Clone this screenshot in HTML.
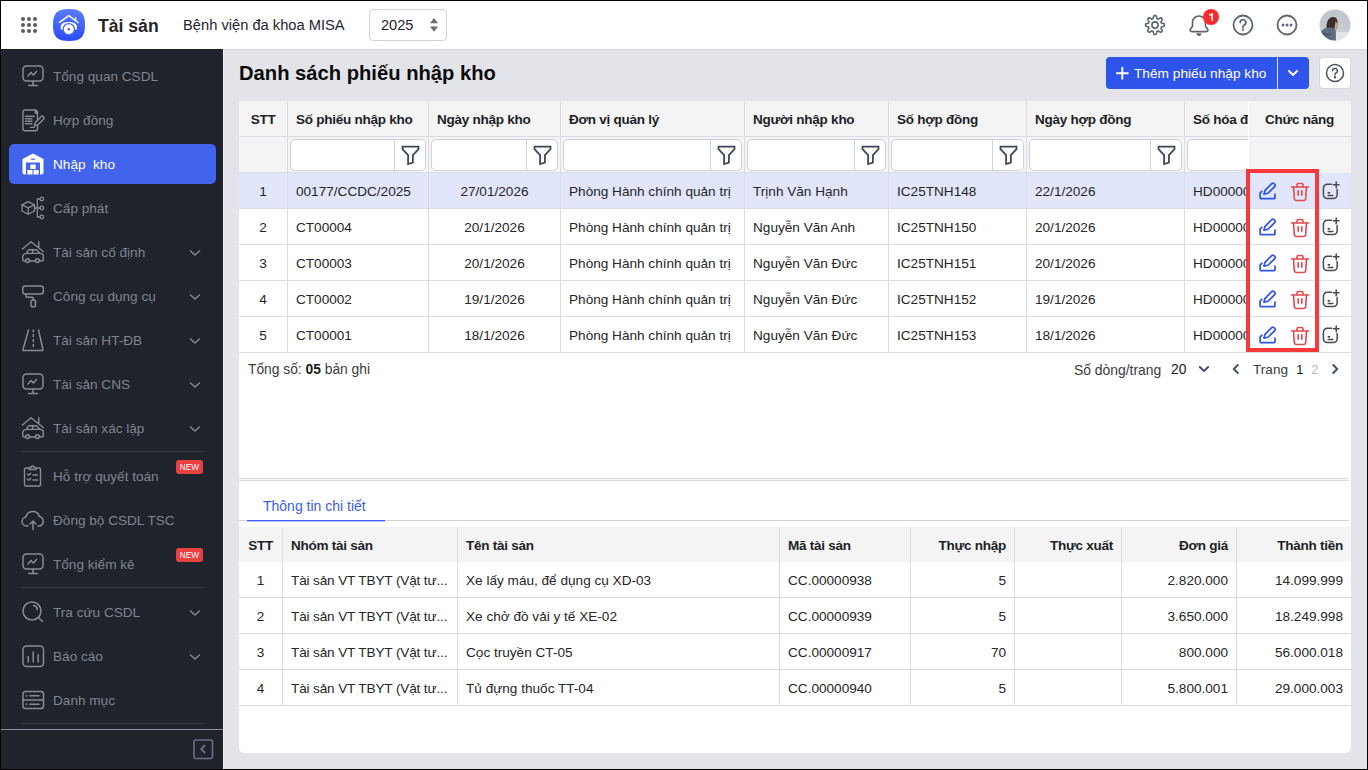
<!DOCTYPE html>
<html><head><meta charset="utf-8">
<style>
*{box-sizing:border-box;margin:0;padding:0}
html,body{width:1368px;height:770px;overflow:hidden;background:#000}
body{font-family:"Liberation Sans",sans-serif;position:relative;color:#262626}
.abs{position:absolute}
#frame{position:absolute;left:1px;top:1px;width:1366px;height:768px;background:#e3e4e9;overflow:hidden}
#hdr{position:absolute;left:0;top:0;width:1366px;height:48px;background:#fff}
#side{position:absolute;left:0;top:48px;width:222px;height:720px;background:#1f232b}
.nav{position:absolute;left:8px;width:207px;height:40px;border-radius:5px}
.nav .ic{position:absolute;left:13px;top:8px;width:22px;height:22px;overflow:visible}
.nav .tx{position:absolute;left:44px;top:0;line-height:40px;font-size:13.6px;color:#80858f;white-space:nowrap}
.nav .chev{position:absolute;left:180px;top:15px;width:12px;height:10px}
.nav.act{background:#4263eb}
.nav.act .tx{color:#fff;top:1px}
.nav.act .ic{top:9px}
.new{position:absolute;left:167px;top:3px;width:27px;height:14px;background:#e8413f;color:#fff;font-size:8.3px;line-height:14px;text-align:center;border-radius:3px}
.sdiv{position:absolute;left:21px;width:181px;height:1px;background:#3a3f49}
#main{position:absolute;left:0;top:0;width:1366px;height:768px}
table{border-collapse:collapse;table-layout:fixed}
.th{font-size:13.5px;font-weight:700;color:#1c1f26;line-height:35px;padding-top:1px;white-space:nowrap;letter-spacing:-.25px}
.td{font-size:13.6px;color:#262626;line-height:35px;padding-top:1px;white-space:nowrap}
.flt{height:32px;background:#fff;border:1px solid #cdd2dc;border-radius:5px}
</style></head><body>
<div id="frame">
  <div id="hdr">
    <!-- app grid -->
    <svg class="abs" style="left:20px;top:16px" width="16" height="16" viewBox="0 0 16 16" fill="#5c5c5c">
      <circle cx="2" cy="2" r="2"/><circle cx="8" cy="2" r="2"/><circle cx="14" cy="2" r="2"/>
      <circle cx="2" cy="8" r="2"/><circle cx="8" cy="8" r="2"/><circle cx="14" cy="8" r="2"/>
      <circle cx="2" cy="14" r="2"/><circle cx="8" cy="14" r="2"/><circle cx="14" cy="14" r="2"/>
    </svg>
    <!-- logo -->
    <svg class="abs" style="left:52px;top:8px" width="32" height="32" viewBox="0 0 32 32">
      <defs><linearGradient id="lg" x1="0" y1="0" x2="0" y2="1"><stop offset="0" stop-color="#5b7cff"/><stop offset="1" stop-color="#2b4cf6"/></linearGradient></defs>
      <path d="M16 0C28 0 32 4 32 16S28 32 16 32 0 28 0 16 4 0 16 0Z" fill="url(#lg)"/>
      <path d="M6.6 13.4L15.8 6.6l9.3 6.9" fill="none" stroke="#fff" stroke-width="1.5" stroke-linecap="round" stroke-linejoin="round"/>
      <path d="M22.6 8.8v3" fill="none" stroke="#fff" stroke-width="1.5" stroke-linecap="round"/>
      <path d="M7.8 20.8v-3.6c0-2.6 3.6-4.2 8-4.2s8 1.6 8 4.2v3.6z" fill="#fff"/>
      <circle cx="15.8" cy="20.2" r="6.3" fill="#4065fa"/>
      <circle cx="15.8" cy="20.2" r="5" fill="#fff"/>
      <path d="M15.8 18.6l1.6 1.6-1.6 1.6-1.6-1.6z" fill="#4065fa"/>
    </svg>
    <div class="abs" style="left:97px;top:14px;font-size:17.6px;font-weight:700;color:#262626;line-height:22px">Tài sản</div>
    <div class="abs" style="left:182px;top:14px;font-size:14.7px;color:#1f2433;line-height:20px">Bệnh viện đa khoa MISA</div>
    <div class="abs" style="left:368px;top:8px;width:78px;height:32px;border:1px solid #cfd3da;border-radius:4px;background:#fff">
      <div class="abs" style="left:11px;top:6px;font-size:14.6px;line-height:18px;color:#1f2433">2025</div>
      <svg class="abs" style="left:59px;top:7px" width="10" height="16" viewBox="0 0 10 16" fill="#6b6b6b"><path d="M1 6.3L5 1 9 6.3Z"/><path d="M1 9.5L5 14.7 9 9.5Z"/></svg>
    </div>
    <!-- right icons -->
    <svg class="abs" style="left:1143px;top:13px" width="22" height="22" viewBox="0 0 22 22" fill="none" stroke="#5d636d" stroke-width="1.6" stroke-linejoin="round">
      <path d="M11.00 1.60 L11.25 1.60 L11.49 1.61 L11.74 1.63 L11.98 1.65 L12.19 1.95 L12.36 2.39 L12.51 2.86 L12.63 3.35 L12.72 3.82 L12.80 4.27 L12.90 4.58 L13.07 4.63 L13.24 4.68 L13.40 4.75 L13.56 4.81 L13.73 4.88 L13.88 4.95 L14.04 5.03 L14.20 5.11 L14.48 4.96 L14.86 4.71 L15.26 4.44 L15.69 4.18 L16.12 3.95 L16.56 3.76 L16.92 3.69 L17.10 3.85 L17.29 4.01 L17.47 4.18 L17.65 4.35 L17.82 4.53 L17.99 4.71 L18.15 4.90 L18.31 5.08 L18.24 5.44 L18.05 5.88 L17.82 6.31 L17.56 6.74 L17.29 7.14 L17.04 7.51 L16.89 7.80 L16.97 7.96 L17.05 8.12 L17.12 8.27 L17.19 8.44 L17.25 8.60 L17.32 8.76 L17.37 8.93 L17.42 9.10 L17.73 9.20 L18.18 9.28 L18.65 9.37 L19.14 9.49 L19.61 9.64 L20.05 9.81 L20.35 10.02 L20.37 10.26 L20.39 10.51 L20.40 10.75 L20.40 11.00 L20.40 11.25 L20.39 11.49 L20.37 11.74 L20.35 11.98 L20.05 12.19 L19.61 12.36 L19.14 12.51 L18.65 12.63 L18.18 12.72 L17.73 12.80 L17.42 12.90 L17.37 13.07 L17.32 13.24 L17.25 13.40 L17.19 13.56 L17.12 13.73 L17.05 13.88 L16.97 14.04 L16.89 14.20 L17.04 14.48 L17.29 14.86 L17.56 15.26 L17.82 15.69 L18.05 16.12 L18.24 16.56 L18.31 16.92 L18.15 17.10 L17.99 17.29 L17.82 17.47 L17.65 17.65 L17.47 17.82 L17.29 17.99 L17.10 18.15 L16.92 18.31 L16.56 18.24 L16.12 18.05 L15.69 17.82 L15.26 17.56 L14.86 17.29 L14.48 17.04 L14.20 16.89 L14.04 16.97 L13.88 17.05 L13.73 17.12 L13.56 17.19 L13.40 17.25 L13.24 17.32 L13.07 17.37 L12.90 17.42 L12.80 17.73 L12.72 18.18 L12.63 18.65 L12.51 19.14 L12.36 19.61 L12.19 20.05 L11.98 20.35 L11.74 20.37 L11.49 20.39 L11.25 20.40 L11.00 20.40 L10.75 20.40 L10.51 20.39 L10.26 20.37 L10.02 20.35 L9.81 20.05 L9.64 19.61 L9.49 19.14 L9.37 18.65 L9.28 18.18 L9.20 17.73 L9.10 17.42 L8.93 17.37 L8.76 17.32 L8.60 17.25 L8.44 17.19 L8.27 17.12 L8.12 17.05 L7.96 16.97 L7.80 16.89 L7.52 17.04 L7.14 17.29 L6.74 17.56 L6.31 17.82 L5.88 18.05 L5.44 18.24 L5.08 18.31 L4.90 18.15 L4.71 17.99 L4.53 17.82 L4.35 17.65 L4.18 17.47 L4.01 17.29 L3.85 17.10 L3.69 16.92 L3.76 16.56 L3.95 16.12 L4.18 15.69 L4.44 15.26 L4.71 14.86 L4.96 14.49 L5.11 14.20 L5.03 14.04 L4.95 13.88 L4.88 13.73 L4.81 13.56 L4.75 13.40 L4.68 13.24 L4.63 13.07 L4.58 12.90 L4.27 12.80 L3.82 12.72 L3.35 12.63 L2.86 12.51 L2.39 12.36 L1.95 12.19 L1.65 11.98 L1.63 11.74 L1.61 11.49 L1.60 11.25 L1.60 11.00 L1.60 10.75 L1.61 10.51 L1.63 10.26 L1.65 10.02 L1.95 9.81 L2.39 9.64 L2.86 9.49 L3.35 9.37 L3.82 9.28 L4.27 9.20 L4.58 9.10 L4.63 8.93 L4.68 8.76 L4.75 8.60 L4.81 8.44 L4.88 8.27 L4.95 8.12 L5.03 7.96 L5.11 7.80 L4.96 7.51 L4.71 7.14 L4.44 6.74 L4.18 6.31 L3.95 5.88 L3.76 5.44 L3.69 5.08 L3.85 4.90 L4.01 4.71 L4.18 4.53 L4.35 4.35 L4.53 4.18 L4.71 4.01 L4.90 3.85 L5.08 3.69 L5.44 3.76 L5.88 3.95 L6.31 4.18 L6.74 4.44 L7.14 4.71 L7.52 4.96 L7.80 5.11 L7.96 5.03 L8.12 4.95 L8.27 4.88 L8.44 4.81 L8.60 4.75 L8.76 4.68 L8.93 4.63 L9.10 4.58 L9.20 4.27 L9.28 3.82 L9.37 3.35 L9.49 2.86 L9.64 2.39 L9.81 1.95 L10.02 1.65 L10.26 1.63 L10.51 1.61 L10.75 1.60Z"/>
      <circle cx="11" cy="11" r="3.1"/>
    </svg>
    <svg class="abs" style="left:1187px;top:12px" width="22" height="24" viewBox="0 0 22 24" fill="none" stroke="#5d636d" stroke-width="1.6" stroke-linejoin="round">
      <path d="M4.5 13V9.5a6.5 6.5 0 0 1 13 0V13c0 1.5 2.5 2.4 2.5 4 0 1-1 1.6-2.2 1.6H4.2c-1.2 0-2.2-.6-2.2-1.6 0-1.6 2.5-2.5 2.5-4z"/>
      <path d="M9.2 21h3.6l-1.8 1.3z" fill="#5d636d"/>
    </svg>
    <svg class="abs" style="left:1202px;top:8px" width="16" height="16" viewBox="0 0 16 16"><circle cx="8" cy="8" r="8" fill="#fb2a2f"/><path d="M6.2 5.6L8.6 4.2h1.3v7.6H8.3V6.1L6.2 7.2z" fill="#fff"/></svg>
    <svg class="abs" style="left:1231px;top:13px" width="22" height="22" viewBox="0 0 22 22" fill="none" stroke="#5f6670" stroke-width="1.8">
      <circle cx="11" cy="11" r="9.5"/><path d="M8.2 8.5a2.8 2.8 0 1 1 4 2.5c-.8.4-1.2 1-1.2 1.8v.7" stroke-linecap="round"/><circle cx="11" cy="15.8" r=".4" fill="#5f6670"/>
    </svg>
    <svg class="abs" style="left:1275px;top:13px" width="22" height="22" viewBox="0 0 22 22" fill="none" stroke="#5f6670" stroke-width="1.8">
      <circle cx="11" cy="11" r="9.5"/><circle cx="7" cy="11" r=".6" fill="#5f6670"/><circle cx="11" cy="11" r=".6" fill="#5f6670"/><circle cx="15" cy="11" r=".6" fill="#5f6670"/>
    </svg>
    <svg class="abs" style="left:1318px;top:8px" width="32" height="32" viewBox="0 0 32 32">
      <defs><clipPath id="av"><circle cx="16" cy="16" r="15.5"/></clipPath>
      <linearGradient id="avg" x1="0" y1="0" x2="0" y2="1"><stop offset="0" stop-color="#bfc3cb"/><stop offset=".6" stop-color="#c6c9cf"/><stop offset="1" stop-color="#dcdcdc"/></linearGradient></defs>
      <g clip-path="url(#av)">
        <rect width="32" height="32" fill="url(#avg)"/>
        <path d="M17 23h15v9H16z" fill="#e4e4e4"/>
        <path d="M7.5 19c-.3-5 1.5-10.5 6-11 3.5-.3 5 1.8 5 5.5l-.5 6-4 2z" fill="#3a2f2a"/>
        <path d="M16.5 12.5c1.2.4 1.8 2.2 1.6 4.5l-.7 3.5-2 .2z" fill="#c9a999"/>
        <path d="M2 22.5c2-3 6-4.5 10-4 2.5.3 4.5 1.5 4.8 3.5l.2 10H4z" fill="#5d6d82"/>
        <path d="M4 24.5l5 1.5 4-1" stroke="#3f4b5a" stroke-width="1.2" fill="none"/>
      </g>
    </svg>
  </div>

  <div id="side">
    <!-- Tong quan CSDL -->
    <div class="nav" style="top:8px">
      <svg class="ic" viewBox="0 0 22 22" fill="none" stroke="#878c96" stroke-width="1.5" stroke-linecap="round" stroke-linejoin="round"><rect x="1" y="1" width="20" height="15" rx="3.5"/><path d="M11 16v4M6.5 20.5h9M6 11l3-3.5 2.5 2.5 3-3.5"/></svg>
      <div class="tx">Tổng quan CSDL</div>
    </div>
    <!-- Hop dong -->
    <div class="nav" style="top:52px">
      <svg class="ic" viewBox="0 0 22 22" fill="none" stroke="#878c96" stroke-width="1.4" stroke-linecap="round" stroke-linejoin="round"><path d="M13.8 1H3a2 2 0 0 0-2 2v16.8a2 2 0 0 0 2 2h10.5a2 2 0 0 0 2-2V2.8z"/><path d="M13.3 1.6v2.6h2z" fill="#878c96"/><path d="M3.4 7.3h9M3.4 9.7h6.6M3.4 12.2h6.6M3.4 14.7h6.6M8.4 18.4h4"/><path d="M12.4 16.8l.9-3.3 6-6a1.3 1.3 0 0 1 1.8 0l.6.6a1.3 1.3 0 0 1 0 1.8l-6 6z" fill="#1f232b"/></svg>
      <div class="tx">Hợp đồng</div>
    </div>
    <!-- Nhap kho active -->
    <div class="nav act" style="top:95px;height:40px">
      <svg class="ic" viewBox="0 0 22 22" fill="#fff"><path d="M11 0.5L21.5 6v13.5a2 2 0 0 1-2 2h-1.5V9.5H4v12H2.5a2 2 0 0 1-2-2V6z"/><rect x="9" y="5.5" width="4" height="1.2" rx=".5" fill="#4263eb"/><rect x="8.3" y="11.5" width="5.4" height="4.6" rx=".6"/><rect x="5.3" y="17" width="5.2" height="4.5" rx=".6"/><rect x="11.5" y="17" width="5.2" height="4.5" rx=".6"/></svg>
      <div class="tx">Nhập&nbsp; kho</div>
    </div>
    <!-- Cap phat -->
    <div class="nav" style="top:140px">
      <svg class="ic" viewBox="0 0 22 22" fill="none" stroke="#878c96" stroke-width="1.3" stroke-linecap="round" stroke-linejoin="round"><path d="M6.2 4.6l6.3 3.2V14l-6.3 3.1L0 14V7.8z"/><path d="M0 7.8l6.2 3.1 6.3-3.1M6.2 10.9v6.2"/><path d="M12.5 11H18M15.3 2v18M15.3 2H18M15.3 20H18"/><circle cx="19.8" cy="2" r="1.8"/><circle cx="19.8" cy="11" r="1.8"/><circle cx="19.8" cy="20" r="1.8"/></svg>
      <div class="tx">Cấp phát</div>
    </div>
    <!-- Tai san co dinh -->
    <div class="nav" style="top:184px">
      <svg class="ic" viewBox="0 0 22 22" fill="none" stroke="#878c96" stroke-width="1.4" stroke-linecap="round" stroke-linejoin="round"><path d="M0.5 8L9 0.8l12.3 9.7M16.8 0.5v6"/><path d="M3.7 20H2a1.2 1.2 0 0 1-1.2-1.2v-3.2a3 3 0 0 1 3-3h.3L6 9.5a1.6 1.6 0 0 1 1.3-.8h6.8a1.6 1.6 0 0 1 1.3.8l2.3 2.9h.5a3 3 0 0 1 3 3v3.4A1.2 1.2 0 0 1 20 20h-2.7M7.5 20h6M4.2 12.4h13.4M10.6 8.8v3.6"/><circle cx="5.6" cy="19.6" r="1.9"/><circle cx="15.4" cy="19.6" r="1.9"/></svg>
      <div class="tx">Tài sản cố định</div>
      <svg class="chev" viewBox="0 0 12 10" fill="none" stroke="#878c96" stroke-width="1.5" stroke-linecap="round" stroke-linejoin="round"><path d="M1.5 3l4.5 4 4.5-4"/></svg>
    </div>
    <!-- Cong cu dung cu -->
    <div class="nav" style="top:228px">
      <svg class="ic" viewBox="0 0 22 22" fill="none" stroke="#878c96" stroke-width="1.5" stroke-linecap="round" stroke-linejoin="round"><rect x="0.8" y="1" width="20.5" height="8" rx="2.5"/><path d="M4 9v2a1.2 1.2 0 0 0 1.2 1.2h5a1.2 1.2 0 0 1 1.2 1.2v1.5"/><rect x="9" y="15" width="4.5" height="6.8" rx="1.8"/></svg>
      <div class="tx">Công cụ dụng cụ</div>
      <svg class="chev" viewBox="0 0 12 10" fill="none" stroke="#878c96" stroke-width="1.5" stroke-linecap="round" stroke-linejoin="round"><path d="M1.5 3l4.5 4 4.5-4"/></svg>
    </div>
    <!-- Tai san HT-DB -->
    <div class="nav" style="top:272px">
      <svg class="ic" viewBox="0 0 22 22" fill="none" stroke="#878c96" stroke-width="1.5" stroke-linecap="round" stroke-linejoin="round"><path d="M6.5 1L1 20.5a.8.8 0 0 0 .8 1h18.4a.8.8 0 0 0 .8-1L16.5 1"/><path d="M11.3 1v1.8M11.3 5.5v2M11.3 10.5v2M11.3 15.5v2"/></svg>
      <div class="tx">Tài sản HT-ĐB</div>
      <svg class="chev" viewBox="0 0 12 10" fill="none" stroke="#878c96" stroke-width="1.5" stroke-linecap="round" stroke-linejoin="round"><path d="M1.5 3l4.5 4 4.5-4"/></svg>
    </div>
    <!-- Tai san CNS -->
    <div class="nav" style="top:316px">
      <svg class="ic" viewBox="0 0 22 22" fill="none" stroke="#878c96" stroke-width="1.5" stroke-linecap="round" stroke-linejoin="round"><rect x="1" y="1" width="20" height="15" rx="3.5"/><path d="M11 16v4M6.5 20.5h9M6 11l3-3.5 2.5 2.5 3-3.5"/></svg>
      <div class="tx">Tài sản CNS</div>
      <svg class="chev" viewBox="0 0 12 10" fill="none" stroke="#878c96" stroke-width="1.5" stroke-linecap="round" stroke-linejoin="round"><path d="M1.5 3l4.5 4 4.5-4"/></svg>
    </div>
    <!-- Tai san xac lap -->
    <div class="nav" style="top:360px">
      <svg class="ic" viewBox="0 0 22 22" fill="none" stroke="#878c96" stroke-width="1.4" stroke-linecap="round" stroke-linejoin="round"><path d="M0.5 8L9 0.8l12.3 9.7M16.8 0.5v6"/><path d="M3.7 20H2a1.2 1.2 0 0 1-1.2-1.2v-3.2a3 3 0 0 1 3-3h.3L6 9.5a1.6 1.6 0 0 1 1.3-.8h6.8a1.6 1.6 0 0 1 1.3.8l2.3 2.9h.5a3 3 0 0 1 3 3v3.4A1.2 1.2 0 0 1 20 20h-2.7M7.5 20h6M4.2 12.4h13.4M10.6 8.8v3.6"/><circle cx="5.6" cy="19.6" r="1.9"/><circle cx="15.4" cy="19.6" r="1.9"/></svg>
      <div class="tx">Tài sản xác lập</div>
      <svg class="chev" viewBox="0 0 12 10" fill="none" stroke="#878c96" stroke-width="1.5" stroke-linecap="round" stroke-linejoin="round"><path d="M1.5 3l4.5 4 4.5-4"/></svg>
    </div>
    <div class="sdiv" style="top:402px"></div>
    <!-- Ho tro quyet toan -->
    <div class="nav" style="top:408px">
      <svg class="ic" viewBox="0 0 22 22" fill="none" stroke="#878c96" stroke-width="1.4" stroke-linecap="round" stroke-linejoin="round"><path d="M6 3H4a1.5 1.5 0 0 0-1.5 1.5v15A1.5 1.5 0 0 0 4 21h13a1.5 1.5 0 0 0 1.5-1.5v-15A1.5 1.5 0 0 0 17 3h-2"/><path d="M7 4.5V2.5h2a1.5 1.5 0 0 1 3 0h2v2z"/><path d="M5.5 9l1.3 1.3 2-2M5.5 14l1.3 1.3 2-2M11 10h4.5M11 15h4.5"/></svg>
      <div class="tx">Hỗ trợ quyết toán</div>
      <div class="new">NEW</div>
    </div>
    <!-- Dong bo -->
    <div class="nav" style="top:452px">
      <svg class="ic" viewBox="0 0 24 22" style="left:12px;width:24px" fill="none" stroke="#878c96" stroke-width="1.5" stroke-linecap="round" stroke-linejoin="round"><path d="M7 17H5.5a4.5 4.5 0 0 1-.6-8.95A7 7 0 0 1 18.5 7.5 5 5 0 0 1 19 17h-2"/><path d="M12 20.5v-8M9 15l3-3 3 3"/></svg>
      <div class="tx">Đồng bộ CSDL TSC</div>
    </div>
    <!-- Tong kiem ke -->
    <div class="nav" style="top:496px">
      <svg class="ic" viewBox="0 0 22 22" fill="none" stroke="#878c96" stroke-width="1.5" stroke-linecap="round" stroke-linejoin="round"><rect x="1" y="1" width="20" height="15" rx="3.5"/><path d="M11 16v4M6.5 20.5h9M6 11l3-3.5 2.5 2.5 3-3.5"/></svg>
      <div class="tx">Tổng kiểm kê</div>
      <div class="new">NEW</div>
    </div>
    <div class="sdiv" style="top:538px"></div>
    <!-- Tra cuu -->
    <div class="nav" style="top:544px">
      <svg class="ic" viewBox="0 0 22 22" fill="none" stroke="#878c96" stroke-width="1.5" stroke-linecap="round" stroke-linejoin="round"><circle cx="10" cy="10" r="9"/><path d="M16.5 16.5l4 4M11.5 4.5a5 5 0 0 1 4 4"/></svg>
      <div class="tx">Tra cứu CSDL</div>
      <svg class="chev" viewBox="0 0 12 10" fill="none" stroke="#878c96" stroke-width="1.5" stroke-linecap="round" stroke-linejoin="round"><path d="M1.5 3l4.5 4 4.5-4"/></svg>
    </div>
    <!-- Bao cao -->
    <div class="nav" style="top:588px">
      <svg class="ic" viewBox="0 0 22 22" fill="none" stroke="#878c96" stroke-width="1.5" stroke-linecap="round" stroke-linejoin="round"><rect x="1" y="1" width="20.5" height="20.5" rx="3.5"/><path d="M6.3 11.5v5.5M11.2 7v10M16.2 9.5v7.5"/></svg>
      <div class="tx">Báo cáo</div>
      <svg class="chev" viewBox="0 0 12 10" fill="none" stroke="#878c96" stroke-width="1.5" stroke-linecap="round" stroke-linejoin="round"><path d="M1.5 3l4.5 4 4.5-4"/></svg>
    </div>
    <!-- Danh muc -->
    <div class="nav" style="top:632px">
      <svg class="ic" viewBox="0 0 22 22" fill="none" stroke="#878c96" stroke-width="1.5" stroke-linecap="round" stroke-linejoin="round"><rect x="1" y="2.5" width="20.5" height="17" rx="2.5"/><path d="M1 11h20.5M8 6.8h9M8 15.3h9"/><circle cx="4.5" cy="6.8" r=".3"/><circle cx="4.5" cy="15.3" r=".3"/></svg>
      <div class="tx">Danh mục</div>
    </div>
    <div class="sdiv" style="top:674px"></div>
    <div class="abs" style="left:0;top:680px;width:222px;height:1px;background:#8a90a0"></div>
    <svg class="abs" style="left:192px;top:690px" width="21" height="21" viewBox="0 0 21 21" fill="none" stroke="#6b7186" stroke-width="1.6"><rect x="1" y="1" width="18.5" height="18.5" rx="2"/><path d="M11.5 6.8L8.3 10l3.2 3.4" stroke-width="2" stroke-linecap="round" stroke-linejoin="round"/></svg>
  </div>
  <div id="main">
<div class="abs" style="left:222px;top:48px;width:1px;height:720px;background:#eef0f4"></div>
<div class="abs" style="left:223px;top:48px;width:1143px;height:1px;background:#d5d7dd"></div>
<div class="abs" style="left:238px;top:60px;font-size:20.2px;font-weight:700;color:#0a0a0a;line-height:24px;white-space:nowrap">Danh sách phiếu nhập kho</div>
<div class="abs" style="left:1105px;top:56px;width:203px;height:32px;background:#2e54eb;border-radius:4px">
  <svg class="abs" style="left:10px;top:10px" width="13" height="13" viewBox="0 0 13 13" stroke="#fff" stroke-width="1.9" stroke-linecap="square"><path d="M6.3 1v10.6M1 6.3h10.6"/></svg>
  <div class="abs" style="left:28px;top:1px;line-height:32px;font-size:13.7px;color:#fff;white-space:nowrap">Thêm phiếu nhập kho</div>
  <div class="abs" style="left:171px;top:0;width:1px;height:32px;background:#e8ecff"></div>
  <svg class="abs" style="left:181px;top:11px" width="12" height="10" viewBox="0 0 12 10" fill="none" stroke="#fff" stroke-width="2" stroke-linecap="round" stroke-linejoin="round"><path d="M2 3l4 4 4-4"/></svg>
</div>
<div class="abs" style="left:1318px;top:56px;width:32px;height:32px;background:#fff;border:1px solid #d5d8de;border-radius:4px">
  <svg class="abs" style="left:5px;top:5px" width="20" height="20" viewBox="0 0 20 20" fill="none" stroke="#4a5160" stroke-width="1.5"><circle cx="10" cy="10" r="8.5"/><path d="M7.6 7.8a2.4 2.4 0 1 1 3.4 2.2c-.6.3-1 .8-1 1.5v.6" stroke-linecap="round"/><circle cx="10" cy="14.3" r=".5" fill="#4a5160"/></svg>
</div>
<div class="abs" style="left:238px;top:100px;width:1112px;height:652px;background:#fff;border-radius:0 0 6px 6px;overflow:hidden" id="panel">
<div class="abs" style="left:0;top:0;width:1112px;height:72px;background:#f4f4f5"></div>
<div class="abs" style="left:0;top:72px;width:1112px;height:35px;background:#e1e6fb"></div>
<div class="abs" style="left:0;top:108px;width:1112px;height:35px;background:#fff"></div>
<div class="abs" style="left:0;top:144px;width:1112px;height:35px;background:#fff"></div>
<div class="abs" style="left:0;top:180px;width:1112px;height:35px;background:#fff"></div>
<div class="abs" style="left:0;top:216px;width:1112px;height:35px;background:#fff"></div>
<div class="abs" style="left:0;top:35px;width:1112px;height:1px;background:#dadde4"></div>
<div class="abs" style="left:0;top:71px;width:1112px;height:1px;background:#dadde4"></div>
<div class="abs" style="left:0;top:107px;width:1112px;height:1px;background:#dadde4"></div>
<div class="abs" style="left:0;top:143px;width:1112px;height:1px;background:#dadde4"></div>
<div class="abs" style="left:0;top:179px;width:1112px;height:1px;background:#dadde4"></div>
<div class="abs" style="left:0;top:215px;width:1112px;height:1px;background:#dadde4"></div>
<div class="abs" style="left:0;top:251px;width:1112px;height:1px;background:#dadde4"></div>
<div class="abs" style="left:48px;top:0;width:1px;height:252px;background:#dadde4"></div>
<div class="abs" style="left:189px;top:0;width:1px;height:252px;background:#dadde4"></div>
<div class="abs" style="left:321px;top:0;width:1px;height:252px;background:#dadde4"></div>
<div class="abs" style="left:505px;top:0;width:1px;height:252px;background:#dadde4"></div>
<div class="abs" style="left:649px;top:0;width:1px;height:252px;background:#dadde4"></div>
<div class="abs" style="left:787px;top:0;width:1px;height:252px;background:#dadde4"></div>
<div class="abs" style="left:945px;top:0;width:1px;height:252px;background:#dadde4"></div>
<div class="abs th" style="left:0;width:48px;text-align:center;top:0">STT</div>
<div class="abs th" style="left:57px;top:0">Số phiếu nhập kho</div>
<div class="abs th" style="left:198px;top:0">Ngày nhập kho</div>
<div class="abs th" style="left:330px;top:0">Đơn vị quản lý</div>
<div class="abs th" style="left:514px;top:0">Người nhập kho</div>
<div class="abs th" style="left:658px;top:0">Số hợp đồng</div>
<div class="abs th" style="left:796px;top:0">Ngày hợp đồng</div>
<div class="abs th" style="left:954px;top:0">Số hóa đơn</div>
<div class="abs flt" style="left:51px;top:38px;width:136px">
    <div class="abs" style="left:103px;top:0;width:1px;height:30px;background:#cdd2dc"></div>
    <svg class="abs" style="left:110px;top:5px" width="19" height="20" viewBox="0 0 19 20" fill="none" stroke="#3e4759" stroke-width="1.8" stroke-linejoin="miter"><path d="M1.5 1.6h16v2.6l-5.6 5.8v7.6l-4.8 1.4V10L1.5 4.2z"/></svg>
    </div>
<div class="abs flt" style="left:192px;top:38px;width:127px">
    <div class="abs" style="left:94px;top:0;width:1px;height:30px;background:#cdd2dc"></div>
    <svg class="abs" style="left:101px;top:5px" width="19" height="20" viewBox="0 0 19 20" fill="none" stroke="#3e4759" stroke-width="1.8" stroke-linejoin="miter"><path d="M1.5 1.6h16v2.6l-5.6 5.8v7.6l-4.8 1.4V10L1.5 4.2z"/></svg>
    </div>
<div class="abs flt" style="left:324px;top:38px;width:179px">
    <div class="abs" style="left:146px;top:0;width:1px;height:30px;background:#cdd2dc"></div>
    <svg class="abs" style="left:153px;top:5px" width="19" height="20" viewBox="0 0 19 20" fill="none" stroke="#3e4759" stroke-width="1.8" stroke-linejoin="miter"><path d="M1.5 1.6h16v2.6l-5.6 5.8v7.6l-4.8 1.4V10L1.5 4.2z"/></svg>
    </div>
<div class="abs flt" style="left:508px;top:38px;width:139px">
    <div class="abs" style="left:106px;top:0;width:1px;height:30px;background:#cdd2dc"></div>
    <svg class="abs" style="left:113px;top:5px" width="19" height="20" viewBox="0 0 19 20" fill="none" stroke="#3e4759" stroke-width="1.8" stroke-linejoin="miter"><path d="M1.5 1.6h16v2.6l-5.6 5.8v7.6l-4.8 1.4V10L1.5 4.2z"/></svg>
    </div>
<div class="abs flt" style="left:652px;top:38px;width:133px">
    <div class="abs" style="left:100px;top:0;width:1px;height:30px;background:#cdd2dc"></div>
    <svg class="abs" style="left:107px;top:5px" width="19" height="20" viewBox="0 0 19 20" fill="none" stroke="#3e4759" stroke-width="1.8" stroke-linejoin="miter"><path d="M1.5 1.6h16v2.6l-5.6 5.8v7.6l-4.8 1.4V10L1.5 4.2z"/></svg>
    </div>
<div class="abs flt" style="left:790px;top:38px;width:153px">
    <div class="abs" style="left:120px;top:0;width:1px;height:30px;background:#cdd2dc"></div>
    <svg class="abs" style="left:127px;top:5px" width="19" height="20" viewBox="0 0 19 20" fill="none" stroke="#3e4759" stroke-width="1.8" stroke-linejoin="miter"><path d="M1.5 1.6h16v2.6l-5.6 5.8v7.6l-4.8 1.4V10L1.5 4.2z"/></svg>
    </div>
<div class="abs flt" style="left:948px;top:38px;width:143px">
    <div class="abs" style="left:110px;top:0;width:1px;height:30px;background:#cdd2dc"></div>
    <svg class="abs" style="left:117px;top:5px" width="19" height="20" viewBox="0 0 19 20" fill="none" stroke="#3e4759" stroke-width="1.8" stroke-linejoin="miter"><path d="M1.5 1.6h16v2.6l-5.6 5.8v7.6l-4.8 1.4V10L1.5 4.2z"/></svg>
    </div>
<div class="abs td" style="left:0;width:48px;text-align:center;top:72px">1</div>
<div class="abs td" style="left:57px;top:72px">00177/CCDC/2025</div>
<div class="abs td" style="left:190px;width:131px;text-align:center;top:72px">27/01/2026</div>
<div class="abs td" style="left:330px;top:72px">Phòng Hành chính quản trị</div>
<div class="abs td" style="left:514px;top:72px">Trịnh Văn Hạnh</div>
<div class="abs td" style="left:658px;top:72px">IC25TNH148</div>
<div class="abs td" style="left:796px;top:72px">22/1/2026</div>
<div class="abs td" style="left:954px;top:72px">HD000001</div>
<div class="abs td" style="left:0;width:48px;text-align:center;top:108px">2</div>
<div class="abs td" style="left:57px;top:108px">CT00004</div>
<div class="abs td" style="left:190px;width:131px;text-align:center;top:108px">20/1/2026</div>
<div class="abs td" style="left:330px;top:108px">Phòng Hành chính quản trị</div>
<div class="abs td" style="left:514px;top:108px">Nguyễn Văn Anh</div>
<div class="abs td" style="left:658px;top:108px">IC25TNH150</div>
<div class="abs td" style="left:796px;top:108px">20/1/2026</div>
<div class="abs td" style="left:954px;top:108px">HD000002</div>
<div class="abs td" style="left:0;width:48px;text-align:center;top:144px">3</div>
<div class="abs td" style="left:57px;top:144px">CT00003</div>
<div class="abs td" style="left:190px;width:131px;text-align:center;top:144px">20/1/2026</div>
<div class="abs td" style="left:330px;top:144px">Phòng Hành chính quản trị</div>
<div class="abs td" style="left:514px;top:144px">Nguyễn Văn Đức</div>
<div class="abs td" style="left:658px;top:144px">IC25TNH151</div>
<div class="abs td" style="left:796px;top:144px">20/1/2026</div>
<div class="abs td" style="left:954px;top:144px">HD000003</div>
<div class="abs td" style="left:0;width:48px;text-align:center;top:180px">4</div>
<div class="abs td" style="left:57px;top:180px">CT00002</div>
<div class="abs td" style="left:190px;width:131px;text-align:center;top:180px">19/1/2026</div>
<div class="abs td" style="left:330px;top:180px">Phòng Hành chính quản trị</div>
<div class="abs td" style="left:514px;top:180px">Nguyễn Văn Đức</div>
<div class="abs td" style="left:658px;top:180px">IC25TNH152</div>
<div class="abs td" style="left:796px;top:180px">19/1/2026</div>
<div class="abs td" style="left:954px;top:180px">HD000004</div>
<div class="abs td" style="left:0;width:48px;text-align:center;top:216px">5</div>
<div class="abs td" style="left:57px;top:216px">CT00001</div>
<div class="abs td" style="left:190px;width:131px;text-align:center;top:216px">18/1/2026</div>
<div class="abs td" style="left:330px;top:216px">Phòng Hành chính quản trị</div>
<div class="abs td" style="left:514px;top:216px">Nguyễn Văn Đức</div>
<div class="abs td" style="left:658px;top:216px">IC25TNH153</div>
<div class="abs td" style="left:796px;top:216px">18/1/2026</div>
<div class="abs td" style="left:954px;top:216px">HD000005</div>
<div class="abs" style="left:1009px;top:0;width:103px;height:72px;background:#f4f4f5;border-left:1px solid #fff"></div>
<div class="abs" style="left:1009px;top:72px;width:103px;height:35px;background:#e1e6fb"></div>
<div class="abs" style="left:1009px;top:108px;width:103px;height:35px;background:#fff"></div>
<div class="abs" style="left:1009px;top:144px;width:103px;height:35px;background:#fff"></div>
<div class="abs" style="left:1009px;top:180px;width:103px;height:35px;background:#fff"></div>
<div class="abs" style="left:1009px;top:216px;width:103px;height:35px;background:#fff"></div>
<div class="abs" style="left:1010px;top:35px;width:103px;height:1px;background:#dadde4"></div>
<div class="abs" style="left:1010px;top:107px;width:103px;height:1px;background:#dadde4"></div>
<div class="abs" style="left:1010px;top:143px;width:103px;height:1px;background:#dadde4"></div>
<div class="abs" style="left:1010px;top:179px;width:103px;height:1px;background:#dadde4"></div>
<div class="abs" style="left:1010px;top:215px;width:103px;height:1px;background:#dadde4"></div>
<div class="abs" style="left:1010px;top:251px;width:103px;height:1px;background:#dadde4"></div>
<div class="abs th" style="left:1009px;width:103px;text-align:center;top:0">Chức năng</div>
<svg class="abs" style="left:1019px;top:80px" width="19.5" height="19.5" viewBox="0 0 18 18" fill="none" stroke="#2f54eb" stroke-width="1.6" stroke-linecap="round" stroke-linejoin="round"><path d="M5.5 12.2l1-3.6 6.4-6.4a1.1 1.1 0 0 1 1.6 0l1.1 1.1a1.1 1.1 0 0 1 0 1.6L9.2 11.3z"/><path d="M3.5 9.5l-1.6 1.6v3.6a1.6 1.6 0 0 0 1.6 1.6h10.6a1.6 1.6 0 0 0 1.6-1.6v-2.5"/></svg>
<svg class="abs" style="left:1051px;top:81px" width="20" height="20" viewBox="0 0 20 20" fill="none" stroke="#e5484d" stroke-width="1.6" stroke-linecap="round" stroke-linejoin="round"><path d="M1.5 5h17"/><path d="M7 4.8V2.8a1.3 1.3 0 0 1 1.3-1.3h3.4A1.3 1.3 0 0 1 13 2.8v2"/><path d="M3.5 5l.8 11.5a2.2 2.2 0 0 0 2.2 2h7a2.2 2.2 0 0 0 2.2-2L16.5 5"/><path d="M8.2 8.8v4.5M11.8 8.8v4.5"/></svg>
<svg class="abs" style="left:1083px;top:80px" width="18" height="19" viewBox="0 0 19 20" fill="none" stroke="#474a50" stroke-width="1.6" stroke-linecap="round" stroke-linejoin="round"><path d="M10 3.5H5.5a4 4 0 0 0-4 4v7a4 4 0 0 0 4 4h6.5a4 4 0 0 0 4-4V9"/><path d="M15 1v6M12 4h6"/><path d="M6.5 12.5h1.5M6.5 15.2h5"/></svg>
<svg class="abs" style="left:1019px;top:116px" width="19.5" height="19.5" viewBox="0 0 18 18" fill="none" stroke="#2f54eb" stroke-width="1.6" stroke-linecap="round" stroke-linejoin="round"><path d="M5.5 12.2l1-3.6 6.4-6.4a1.1 1.1 0 0 1 1.6 0l1.1 1.1a1.1 1.1 0 0 1 0 1.6L9.2 11.3z"/><path d="M3.5 9.5l-1.6 1.6v3.6a1.6 1.6 0 0 0 1.6 1.6h10.6a1.6 1.6 0 0 0 1.6-1.6v-2.5"/></svg>
<svg class="abs" style="left:1051px;top:117px" width="20" height="20" viewBox="0 0 20 20" fill="none" stroke="#e5484d" stroke-width="1.6" stroke-linecap="round" stroke-linejoin="round"><path d="M1.5 5h17"/><path d="M7 4.8V2.8a1.3 1.3 0 0 1 1.3-1.3h3.4A1.3 1.3 0 0 1 13 2.8v2"/><path d="M3.5 5l.8 11.5a2.2 2.2 0 0 0 2.2 2h7a2.2 2.2 0 0 0 2.2-2L16.5 5"/><path d="M8.2 8.8v4.5M11.8 8.8v4.5"/></svg>
<svg class="abs" style="left:1083px;top:116px" width="18" height="19" viewBox="0 0 19 20" fill="none" stroke="#474a50" stroke-width="1.6" stroke-linecap="round" stroke-linejoin="round"><path d="M10 3.5H5.5a4 4 0 0 0-4 4v7a4 4 0 0 0 4 4h6.5a4 4 0 0 0 4-4V9"/><path d="M15 1v6M12 4h6"/><path d="M6.5 12.5h1.5M6.5 15.2h5"/></svg>
<svg class="abs" style="left:1019px;top:152px" width="19.5" height="19.5" viewBox="0 0 18 18" fill="none" stroke="#2f54eb" stroke-width="1.6" stroke-linecap="round" stroke-linejoin="round"><path d="M5.5 12.2l1-3.6 6.4-6.4a1.1 1.1 0 0 1 1.6 0l1.1 1.1a1.1 1.1 0 0 1 0 1.6L9.2 11.3z"/><path d="M3.5 9.5l-1.6 1.6v3.6a1.6 1.6 0 0 0 1.6 1.6h10.6a1.6 1.6 0 0 0 1.6-1.6v-2.5"/></svg>
<svg class="abs" style="left:1051px;top:153px" width="20" height="20" viewBox="0 0 20 20" fill="none" stroke="#e5484d" stroke-width="1.6" stroke-linecap="round" stroke-linejoin="round"><path d="M1.5 5h17"/><path d="M7 4.8V2.8a1.3 1.3 0 0 1 1.3-1.3h3.4A1.3 1.3 0 0 1 13 2.8v2"/><path d="M3.5 5l.8 11.5a2.2 2.2 0 0 0 2.2 2h7a2.2 2.2 0 0 0 2.2-2L16.5 5"/><path d="M8.2 8.8v4.5M11.8 8.8v4.5"/></svg>
<svg class="abs" style="left:1083px;top:152px" width="18" height="19" viewBox="0 0 19 20" fill="none" stroke="#474a50" stroke-width="1.6" stroke-linecap="round" stroke-linejoin="round"><path d="M10 3.5H5.5a4 4 0 0 0-4 4v7a4 4 0 0 0 4 4h6.5a4 4 0 0 0 4-4V9"/><path d="M15 1v6M12 4h6"/><path d="M6.5 12.5h1.5M6.5 15.2h5"/></svg>
<svg class="abs" style="left:1019px;top:188px" width="19.5" height="19.5" viewBox="0 0 18 18" fill="none" stroke="#2f54eb" stroke-width="1.6" stroke-linecap="round" stroke-linejoin="round"><path d="M5.5 12.2l1-3.6 6.4-6.4a1.1 1.1 0 0 1 1.6 0l1.1 1.1a1.1 1.1 0 0 1 0 1.6L9.2 11.3z"/><path d="M3.5 9.5l-1.6 1.6v3.6a1.6 1.6 0 0 0 1.6 1.6h10.6a1.6 1.6 0 0 0 1.6-1.6v-2.5"/></svg>
<svg class="abs" style="left:1051px;top:189px" width="20" height="20" viewBox="0 0 20 20" fill="none" stroke="#e5484d" stroke-width="1.6" stroke-linecap="round" stroke-linejoin="round"><path d="M1.5 5h17"/><path d="M7 4.8V2.8a1.3 1.3 0 0 1 1.3-1.3h3.4A1.3 1.3 0 0 1 13 2.8v2"/><path d="M3.5 5l.8 11.5a2.2 2.2 0 0 0 2.2 2h7a2.2 2.2 0 0 0 2.2-2L16.5 5"/><path d="M8.2 8.8v4.5M11.8 8.8v4.5"/></svg>
<svg class="abs" style="left:1083px;top:188px" width="18" height="19" viewBox="0 0 19 20" fill="none" stroke="#474a50" stroke-width="1.6" stroke-linecap="round" stroke-linejoin="round"><path d="M10 3.5H5.5a4 4 0 0 0-4 4v7a4 4 0 0 0 4 4h6.5a4 4 0 0 0 4-4V9"/><path d="M15 1v6M12 4h6"/><path d="M6.5 12.5h1.5M6.5 15.2h5"/></svg>
<svg class="abs" style="left:1019px;top:224px" width="19.5" height="19.5" viewBox="0 0 18 18" fill="none" stroke="#2f54eb" stroke-width="1.6" stroke-linecap="round" stroke-linejoin="round"><path d="M5.5 12.2l1-3.6 6.4-6.4a1.1 1.1 0 0 1 1.6 0l1.1 1.1a1.1 1.1 0 0 1 0 1.6L9.2 11.3z"/><path d="M3.5 9.5l-1.6 1.6v3.6a1.6 1.6 0 0 0 1.6 1.6h10.6a1.6 1.6 0 0 0 1.6-1.6v-2.5"/></svg>
<svg class="abs" style="left:1051px;top:225px" width="20" height="20" viewBox="0 0 20 20" fill="none" stroke="#e5484d" stroke-width="1.6" stroke-linecap="round" stroke-linejoin="round"><path d="M1.5 5h17"/><path d="M7 4.8V2.8a1.3 1.3 0 0 1 1.3-1.3h3.4A1.3 1.3 0 0 1 13 2.8v2"/><path d="M3.5 5l.8 11.5a2.2 2.2 0 0 0 2.2 2h7a2.2 2.2 0 0 0 2.2-2L16.5 5"/><path d="M8.2 8.8v4.5M11.8 8.8v4.5"/></svg>
<svg class="abs" style="left:1083px;top:224px" width="18" height="19" viewBox="0 0 19 20" fill="none" stroke="#474a50" stroke-width="1.6" stroke-linecap="round" stroke-linejoin="round"><path d="M10 3.5H5.5a4 4 0 0 0-4 4v7a4 4 0 0 0 4 4h6.5a4 4 0 0 0 4-4V9"/><path d="M15 1v6M12 4h6"/><path d="M6.5 12.5h1.5M6.5 15.2h5"/></svg>
<div class="abs" style="left:1007px;top:68px;width:73px;height:183px;border:4px solid #f7383c"></div>
<div class="abs" style="left:9px;top:260px;font-size:13.8px;line-height:18px;color:#3b3b3b;white-space:nowrap">Tổng số: <b style="color:#1a1a1a">05</b> bản ghi</div>
<div class="abs" style="left:835px;top:260px;font-size:13.9px;line-height:18px;color:#3b3b3b;white-space:nowrap">Số dòng/trang</div>
<div class="abs" style="left:932px;top:260px;font-size:13.8px;line-height:18px;color:#1a1a1a;white-space:nowrap">20</div>
<svg class="abs" style="left:959px;top:263px" width="12" height="10" viewBox="0 0 12 10" fill="none" stroke="#46516a" stroke-width="2" stroke-linecap="round" stroke-linejoin="round"><path d="M1.8 3l4.2 4 4.2-4"/></svg>
<svg class="abs" style="left:992px;top:262px" width="10" height="12" viewBox="0 0 10 12" fill="none" stroke="#46516a" stroke-width="2" stroke-linecap="round" stroke-linejoin="round"><path d="M6.8 2L2.8 6l4 4"/></svg>
<div class="abs" style="left:1014px;top:260px;font-size:13.6px;line-height:18px;color:#3b3b3b;white-space:nowrap">Trang</div>
<div class="abs" style="left:1057px;top:260px;font-size:13.6px;line-height:18px;color:#1a1a1a;white-space:nowrap">1</div>
<div class="abs" style="left:1072px;top:260px;font-size:13.6px;line-height:18px;color:#b9bcc2;white-space:nowrap">2</div>
<svg class="abs" style="left:1091px;top:262px" width="10" height="12" viewBox="0 0 10 12" fill="none" stroke="#46516a" stroke-width="2" stroke-linecap="round" stroke-linejoin="round"><path d="M3.2 2l4 4-4 4"/></svg>
<div class="abs" style="left:0;top:377px;width:1110px;height:3px;border-top:1px solid #dcdcdc;border-bottom:1px solid #dcdcdc;background:#fafafa"></div>
<div class="abs" style="left:24px;top:396px;font-size:14px;line-height:18px;color:#3d5ce8;white-space:nowrap">Thông tin chi tiết</div>
<div class="abs" style="left:0;top:419px;width:1110px;height:1px;background:#d4d4d4"></div>
<div class="abs" style="left:8px;top:419px;width:138px;height:1px;background:#3d5cec;box-shadow:0 1px 0 rgba(61,92,236,.35)"></div>
<div class="abs" style="left:0;top:426px;width:1112px;height:35px;background:#f4f4f5"></div>
<div class="abs" style="left:0;top:496px;width:1112px;height:1px;background:#dadde4"></div>
<div class="abs" style="left:0;top:532px;width:1112px;height:1px;background:#dadde4"></div>
<div class="abs" style="left:0;top:568px;width:1112px;height:1px;background:#dadde4"></div>
<div class="abs" style="left:0;top:604px;width:1112px;height:1px;background:#dadde4"></div>
<div class="abs" style="left:43px;top:426px;width:1px;height:178px;background:#dadde4"></div>
<div class="abs" style="left:218px;top:426px;width:1px;height:178px;background:#dadde4"></div>
<div class="abs" style="left:540px;top:426px;width:1px;height:178px;background:#dadde4"></div>
<div class="abs" style="left:671px;top:426px;width:1px;height:178px;background:#dadde4"></div>
<div class="abs" style="left:775px;top:426px;width:1px;height:178px;background:#dadde4"></div>
<div class="abs" style="left:882px;top:426px;width:1px;height:178px;background:#dadde4"></div>
<div class="abs" style="left:997px;top:426px;width:1px;height:178px;background:#dadde4"></div>
<div class="abs th" style="left:0px;width:43px;text-align:center;top:426px">STT</div>
<div class="abs th" style="left:52px;top:426px">Nhóm tài sản</div>
<div class="abs th" style="left:227px;top:426px">Tên tài sản</div>
<div class="abs th" style="left:549px;top:426px">Mã tài sản</div>
<div class="abs th" style="left:671px;width:96px;text-align:right;top:426px">Thực nhập</div>
<div class="abs th" style="left:775px;width:99px;text-align:right;top:426px">Thực xuất</div>
<div class="abs th" style="left:882px;width:107px;text-align:right;top:426px">Đơn giá</div>
<div class="abs th" style="left:997px;width:107px;text-align:right;top:426px">Thành tiền</div>
<div class="abs td" style="left:0px;width:43px;text-align:center;top:461px">1</div>
<div class="abs td" style="left:52px;top:461px"><span style="letter-spacing:-.15px">Tài sản VT TBYT (Vật tư...</span></div>
<div class="abs td" style="left:227px;top:461px">Xe lấy máu, để dụng cụ XD-03</div>
<div class="abs td" style="left:549px;top:461px">CC.00000938</div>
<div class="abs td" style="left:671px;width:96px;text-align:right;top:461px">5</div>
<div class="abs td" style="left:775px;width:99px;text-align:right;top:461px"></div>
<div class="abs td" style="left:882px;width:107px;text-align:right;top:461px">2.820.000</div>
<div class="abs td" style="left:997px;width:107px;text-align:right;top:461px">14.099.999</div>
<div class="abs td" style="left:0px;width:43px;text-align:center;top:497px">2</div>
<div class="abs td" style="left:52px;top:497px"><span style="letter-spacing:-.15px">Tài sản VT TBYT (Vật tư...</span></div>
<div class="abs td" style="left:227px;top:497px">Xe chở đồ vải y tế XE-02</div>
<div class="abs td" style="left:549px;top:497px">CC.00000939</div>
<div class="abs td" style="left:671px;width:96px;text-align:right;top:497px">5</div>
<div class="abs td" style="left:775px;width:99px;text-align:right;top:497px"></div>
<div class="abs td" style="left:882px;width:107px;text-align:right;top:497px">3.650.000</div>
<div class="abs td" style="left:997px;width:107px;text-align:right;top:497px">18.249.998</div>
<div class="abs td" style="left:0px;width:43px;text-align:center;top:533px">3</div>
<div class="abs td" style="left:52px;top:533px"><span style="letter-spacing:-.15px">Tài sản VT TBYT (Vật tư...</span></div>
<div class="abs td" style="left:227px;top:533px">Cọc truyền CT-05</div>
<div class="abs td" style="left:549px;top:533px">CC.00000917</div>
<div class="abs td" style="left:671px;width:96px;text-align:right;top:533px">70</div>
<div class="abs td" style="left:775px;width:99px;text-align:right;top:533px"></div>
<div class="abs td" style="left:882px;width:107px;text-align:right;top:533px">800.000</div>
<div class="abs td" style="left:997px;width:107px;text-align:right;top:533px">56.000.018</div>
<div class="abs td" style="left:0px;width:43px;text-align:center;top:569px">4</div>
<div class="abs td" style="left:52px;top:569px"><span style="letter-spacing:-.15px">Tài sản VT TBYT (Vật tư...</span></div>
<div class="abs td" style="left:227px;top:569px">Tủ đựng thuốc TT-04</div>
<div class="abs td" style="left:549px;top:569px">CC.00000940</div>
<div class="abs td" style="left:671px;width:96px;text-align:right;top:569px">5</div>
<div class="abs td" style="left:775px;width:99px;text-align:right;top:569px"></div>
<div class="abs td" style="left:882px;width:107px;text-align:right;top:569px">5.800.001</div>
<div class="abs td" style="left:997px;width:107px;text-align:right;top:569px">29.000.003</div>
</div>
</div><!--/main-->
</div>
</body></html>
